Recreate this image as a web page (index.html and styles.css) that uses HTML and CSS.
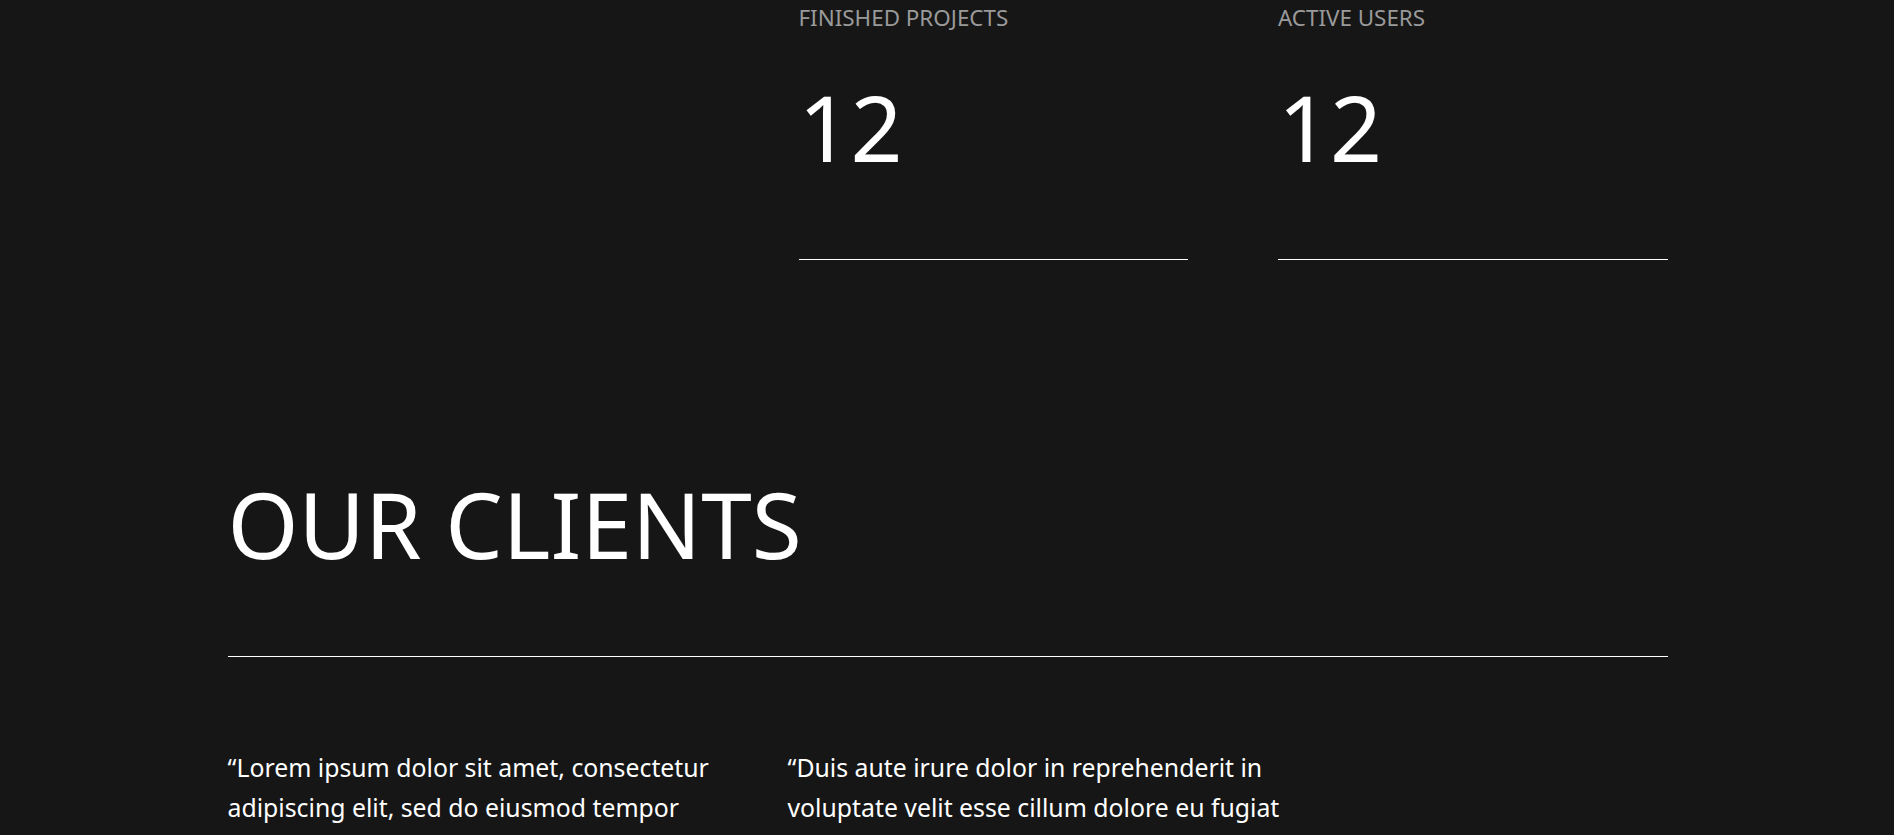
FILE: index.html
```html
<!DOCTYPE html>
<html lang="en">
<head>
<meta charset="utf-8">
<title>Stats and clients</title>
<link rel="stylesheet" href="styles.css">
</head>
<body>
<main class="container">
  <section class="stats">
    <div class="stats-spacer"></div>
    <div class="stat">
      <div class="stat-label">FINISHED PROJECTS</div>
      <div class="stat-value">12</div>
    </div>
    <div class="stat">
      <div class="stat-label">ACTIVE USERS</div>
      <div class="stat-value">12</div>
    </div>
  </section>
  <section class="clients">
    <h2 class="clients-title">OUR CLIENTS</h2>
    <div class="quotes">
      <p class="quote">“Lorem ipsum dolor sit amet, consectetur adipiscing elit, sed do eiusmod tempor incididunt ut labore et dolore magna aliqua.”</p>
      <p class="quote">“Duis aute irure dolor in reprehenderit in voluptate velit esse cillum dolore eu fugiat nulla pariatur.”</p>
    </div>
  </section>
</main>
</body>
</html>
```
FILE: styles.css
```css
html, body {
  margin: 0;
  padding: 0;
  background: #161616;
}
body {
  font-family: "Noto Sans", "Open Sans", sans-serif;
  color: #ffffff;
  padding-left: 1px;
}
.container {
  width: 1440px;
  margin: 0 auto;
}
.stats {
  display: grid;
  grid-template-columns: 481px 1fr 1fr;
  column-gap: 90px;
  padding-top: 3px;
}
.stat {
  padding-bottom: 70px;
  border-bottom: 1px solid #ffffff;
}
.stat-label {
  font-size: 22.4px;
  line-height: 30px;
  color: #9a9a9a;
}
.stat-value {
  margin-top: 32px;
  font-size: 91px;
  line-height: 124px;
  color: #ffffff;
}
.clients {
  padding-top: 202px;
}
.clients-title {
  margin: 0;
  padding-bottom: 70px;
  border-bottom: 1px solid #ffffff;
  font-size: 91px;
  font-weight: 400;
  line-height: 124px;
}
.quotes {
  display: grid;
  grid-template-columns: 520px 520px;
  column-gap: 40px;
  padding-top: 90px;
}
.quote {
  margin: 0;
  font-size: 24.8px;
  line-height: 40px;
  color: #ffffff;
}
```
